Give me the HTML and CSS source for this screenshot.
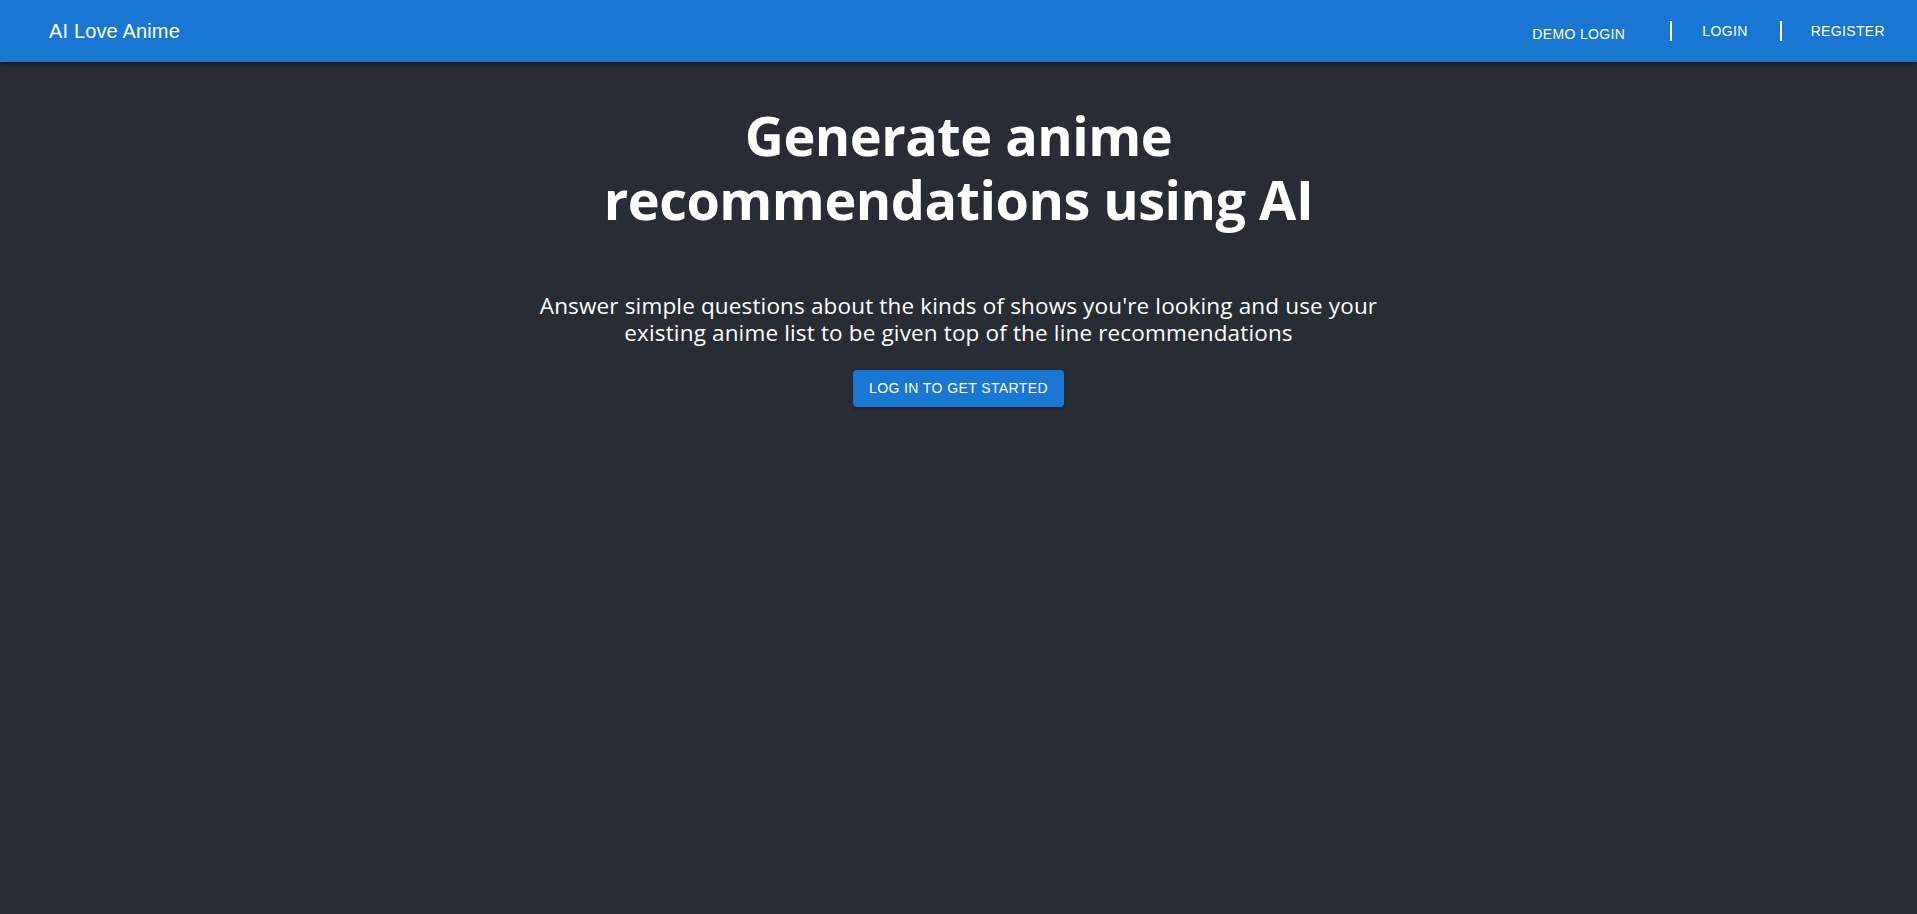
FILE: index.html
```html
<!DOCTYPE html>
<html lang="en">
<head>
<meta charset="utf-8">
<title>AI Love Anime</title>
<link rel="stylesheet" href="styles.css">
</head>
<body>
<header class="appbar">
  <div class="brand">AI Love Anime</div>
  <nav class="nav">
    <a class="nav-btn nav-demo" href="#">Demo Login</a>
    <span class="nav-sep sep-first"></span>
    <a class="nav-btn" href="#">Login</a>
    <span class="nav-sep sep-second"></span>
    <a class="nav-btn" href="#">Register</a>
  </nav>
</header>
<main class="hero">
  <h1 class="hero-title">Generate anime<br>recommendations using AI</h1>
  <p class="hero-text">Answer simple questions about the kinds of shows you're looking and use your<br>existing anime list to be given top of the line recommendations</p>
  <a class="cta" href="#">Log in to get started</a>
</main>
</body>
</html>
```
FILE: styles.css
```css
* { box-sizing: border-box; }
html, body { margin: 0; padding: 0; }
body {
  background: #282c34;
  color: #ffffff;
  min-height: 914px;
  font-family: "Open Sans", "Noto Sans", sans-serif;
}
.appbar {
  height: 62px;
  background: #1976d2;
  display: flex;
  align-items: center;
  justify-content: space-between;
  padding: 0 24px 0 49px;
  box-shadow: 0 2px 4px -1px rgba(0,0,0,0.2), 0 4px 5px 0 rgba(0,0,0,0.14), 0 1px 10px 0 rgba(0,0,0,0.12);
  position: relative;
}
.brand {
  font-family: "Liberation Sans", Arial, sans-serif;
  font-size: 20px;
  line-height: 1.6;
  letter-spacing: 0.15px;
  color: #fff;
}
.nav {
  display: flex;
  align-items: center;
}
.nav-btn {
  font-family: "Liberation Sans", Arial, sans-serif;
  font-size: 14px;
  line-height: 24px;
  letter-spacing: 0.35px;
  text-transform: uppercase;
  color: #fff;
  text-decoration: none;
  padding: 6px 8px;
}
.nav-demo { margin-top: 6px; }
.nav-sep {
  width: 2px;
  height: 20px;
  background: #ffffff;
}
.sep-first { margin: 0 22px 0 37px; }
.sep-second { margin: 0 21px 0 24px; }
.hero {
  text-align: center;
  padding-top: 42px;
}
.hero-title {
  margin: 0;
  font-size: 54px;
  font-weight: 700;
  line-height: 63.5px;
  letter-spacing: -0.5px;
}
.hero-text {
  margin: 61px 0 0;
  font-size: 22.5px;
  line-height: 27px;
  letter-spacing: 0.15px;
}
.cta {
  display: inline-block;
  margin-top: 24px;
  background: #1976d2;
  color: #fff;
  text-decoration: none;
  font-family: "Liberation Sans", Arial, sans-serif;
  font-size: 14px;
  line-height: 25px;
  letter-spacing: 0.4px;
  text-transform: uppercase;
  padding: 6px 16px;
  border-radius: 4px;
  box-shadow: 0 3px 1px -2px rgba(0,0,0,0.2), 0 2px 2px 0 rgba(0,0,0,0.14), 0 1px 5px 0 rgba(0,0,0,0.12);
}
```
